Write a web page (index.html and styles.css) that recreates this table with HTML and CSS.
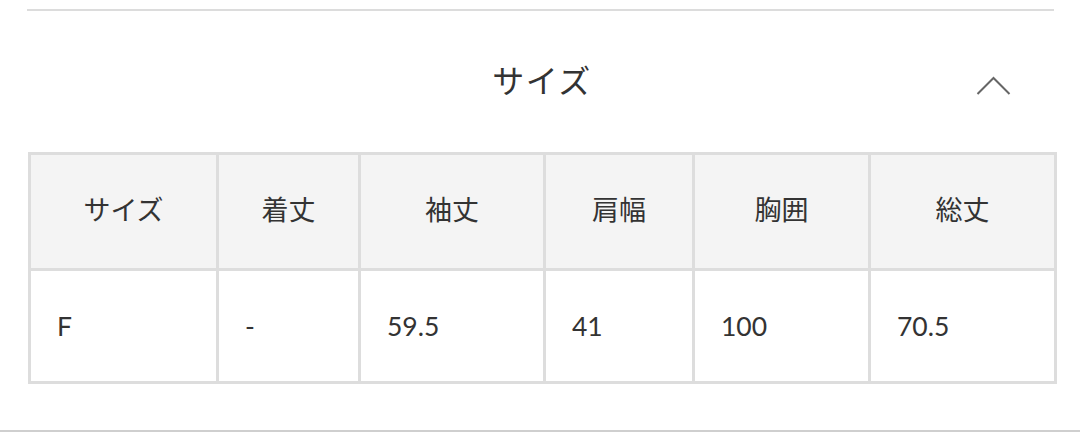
FILE: index.html
```html
<!DOCTYPE html>
<html lang="ja">
<head>
<meta charset="utf-8">
<link rel="stylesheet" href="styles.css">
</head>
<body>
<div class="page">
  <div class="rule-top"></div>
  <div class="section-head">
    <span></span>
    <h2 class="title">サイズ</h2>
    <span class="chevron">
      <svg width="36" height="20" viewBox="0 0 36 20"><polyline points="1.5,18 17.5,2 33.5,18" fill="none" stroke="#666" stroke-width="2"/></svg>
    </span>
  </div>
  <table class="size-table">
    <colgroup>
      <col style="width:188px"><col style="width:142px"><col style="width:185px"><col style="width:149px"><col style="width:176px"><col style="width:186px">
    </colgroup>
    <thead>
      <tr><th>サイズ</th><th>着丈</th><th>袖丈</th><th>肩幅</th><th>胸囲</th><th>総丈</th></tr>
    </thead>
    <tbody>
      <tr><td>F</td><td>-</td><td>59.5</td><td>41</td><td>100</td><td>70.5</td></tr>
    </tbody>
  </table>
</div>
<div class="rule-bottom"></div>
</body>
</html>
```
FILE: styles.css
```css
html, body {
  margin: 0;
  padding: 0;
  background: #fff;
}
body {
  width: 1080px;
  height: 432px;
  overflow: hidden;
  position: relative;
  font-family: Lato, "Noto Sans CJK JP", sans-serif;
  color: #333;
}
.page {
  padding: 9px 26px 0 28px;
}
.rule-top {
  height: 2px;
  background: #dcdcdc;
  margin-left: -1px;
}
.section-head {
  display: grid;
  grid-template-columns: 1fr auto 1fr;
  align-items: center;
  height: 141px;
}
.title {
  margin: 0 0 6px 0;
  font-family: "Noto Sans CJK JP", sans-serif;
  font-weight: 400;
  font-size: 32px;
  letter-spacing: 1.5px;
  color: #333;
  transform: translateX(1px);
}
.chevron {
  justify-self: end;
  margin-right: 42px;
  margin-top: 8px;
  display: flex;
}
.size-table {
  border-collapse: collapse;
  table-layout: fixed;
  width: 1026px;
  border: 3px solid #dddddd;
}
.size-table th, .size-table td {
  border: 3px solid #dddddd;
  font-weight: 400;
}
.size-table th {
  background: #f4f4f4;
  height: 107px;
  text-align: center;
  font-family: "Noto Sans CJK JP", sans-serif;
  font-size: 27px;
  color: #333;
  padding: 0 0 6px 0;
}
.size-table td {
  height: 110px;
  text-align: left;
  padding: 0 0 0 26px;
  font-size: 26.5px;
  color: #333;
}
.rule-bottom {
  position: absolute;
  left: 0;
  right: 0;
  bottom: 0;
  height: 2px;
  background: #cfcfcf;
}
```
